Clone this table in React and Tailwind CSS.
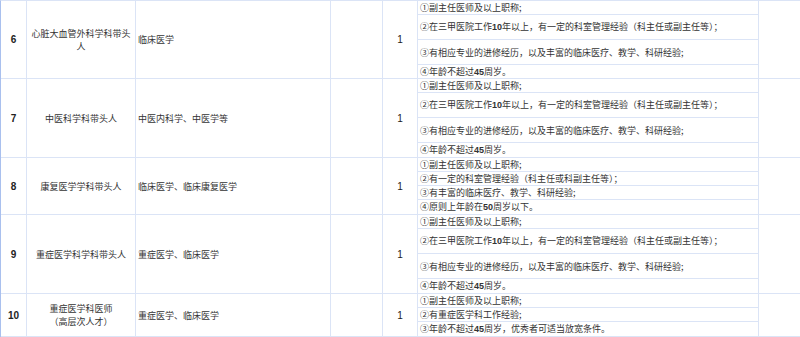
import React from "react";

const rows = [
  {
    no: "6",
    name: ["心脏大血管外科学科带头人"],
    major: "临床医学",
    h: "h-[78px]",
    reqs: [
      { h: "h-[14px]", t: ["①副主任医师及以上职称;"] },
      { h: "h-[25px]", t: ["②在三甲医院工作", "10", "年以上，有一定的科室管理经验（科主任或副主任等）；"] },
      { h: "h-[25px]", t: ["③有相应专业的进修经历，以及丰富的临床医疗、教学、科研经验;"] },
      { h: "flex-1", t: ["④年龄不超过", "45", "周岁。"] },
    ],
  },
  {
    no: "7",
    name: ["中医科学科带头人"],
    major: "中医内科学、中医学等",
    h: "h-[79px]",
    reqs: [
      { h: "h-[14px]", t: ["①副主任医师及以上职称;"] },
      { h: "h-[25px]", t: ["②在三甲医院工作", "10", "年以上，有一定的科室管理经验（科主任或副主任等）；"] },
      { h: "h-[25px]", t: ["③有相应专业的进修经历，以及丰富的临床医疗、教学、科研经验;"] },
      { h: "flex-1", t: ["④年龄不超过", "45", "周岁。"] },
    ],
  },
  {
    no: "8",
    name: ["康复医学学科带头人"],
    major: "临床医学、临床康复医学",
    h: "h-[57px]",
    reqs: [
      { h: "h-[14px]", t: ["①副主任医师及以上职称;"] },
      { h: "h-[14px]", t: ["②有一定的科室管理经验（科主任或科副主任等）；"] },
      { h: "h-[14px]", t: ["③有丰富的临床医疗、教学、科研经验;"] },
      { h: "flex-1", t: ["④原则上年龄在", "50", "周岁以下。"] },
    ],
  },
  {
    no: "9",
    name: ["重症医学科学科带头人"],
    major: "重症医学、临床医学",
    h: "h-[79px]",
    reqs: [
      { h: "h-[14px]", t: ["①副主任医师及以上职称;"] },
      { h: "h-[25px]", t: ["②在三甲医院工作", "10", "年以上，有一定的科室管理经验（科主任或副主任等）；"] },
      { h: "h-[25px]", t: ["③有相应专业的进修经历，以及丰富的临床医疗、教学、科研经验;"] },
      { h: "flex-1", t: ["④年龄不超过", "45", "周岁。"] },
    ],
  },
  {
    no: "10",
    name: ["重症医学科医师", "（高层次人才）"],
    major: "重症医学、临床医学",
    h: "h-[43px]",
    reqs: [
      { h: "h-[14px]", t: ["①副主任医师及以上职称;"] },
      { h: "h-[14px]", t: ["②有重症医学科工作经验;"] },
      { h: "flex-1", t: ["③年龄不超过", "45", "周岁，优秀者可适当放宽条件。"] },
    ],
  },
];

function ReqText({ parts }) {
  return (
    <span className="whitespace-nowrap">
      {parts.map((p, i) =>
        i % 2 === 1 ? (
          <span key={i} className="font-bold font-['Liberation_Sans',sans-serif]">
            {p}
          </span>
        ) : (
          <span key={i}>{p}</span>
        )
      )}
    </span>
  );
}

export default function App() {
  return (
    <div className="w-[800px] h-[337px] overflow-hidden bg-white text-[9px] leading-[11px] text-[#333] font-['Noto_Sans_CJK_SC','Noto_Sans',sans-serif]">
      <div className="border-l border-t border-l-[#a9c0ee] border-t-[#dbe4f6]">
        {rows.map((r) => (
          <div key={r.no} className={`flex border-b border-[#dbe4f6] ${r.h}`}>
            <div className="w-[26px] shrink-0 border-r border-[#dbe4f6] flex items-center justify-center font-bold text-[10px] font-['Liberation_Sans',sans-serif] text-[#222]">
              {r.no}
            </div>
            <div className="w-[109px] shrink-0 border-r border-[#dbe4f6] flex flex-col items-center justify-center text-center px-[3px] leading-[13px]">
              {r.name.map((n) => (
                <span key={n}>{n}</span>
              ))}
            </div>
            <div className="w-[195px] shrink-0 border-r border-[#dbe4f6] flex items-center pl-[2px]">
              {r.major}
            </div>
            <div className="w-[52px] shrink-0 border-r border-[#dbe4f6]" />
            <div className="w-[35px] shrink-0 border-r border-[#dbe4f6] flex items-center justify-center text-[10px] font-['Liberation_Sans',sans-serif] text-[#222]">
              1
            </div>
            <div className="w-[341px] shrink-0 border-r border-[#dbe4f6] flex flex-col">
              {r.reqs.map((q, i) => (
                <div
                  key={i}
                  className={`${q.h} flex items-center pl-[2px] ${
                    i < r.reqs.length - 1 ? "border-b border-[#dbe4f6]" : ""
                  }`}
                >
                  <ReqText parts={q.t} />
                </div>
              ))}
            </div>
            <div className="flex-1" />
          </div>
        ))}
      </div>
    </div>
  );
}
